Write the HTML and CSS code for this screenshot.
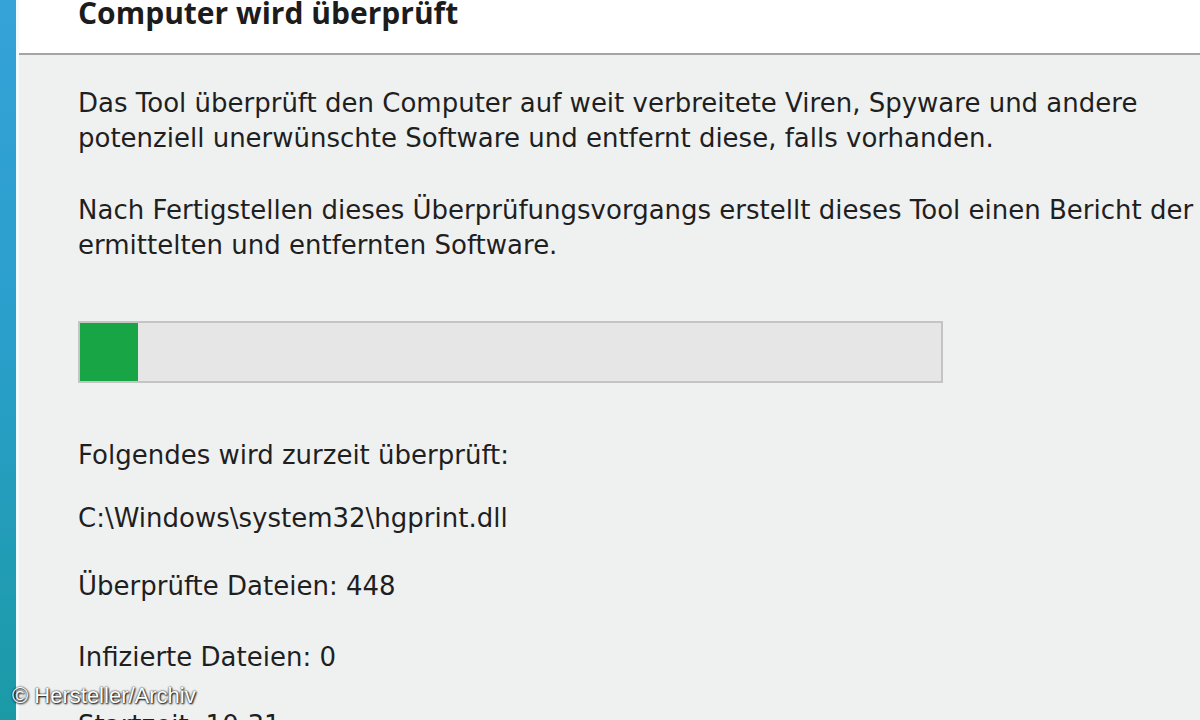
FILE: index.html
```html
<!DOCTYPE html>
<html lang="de">
<head>
<meta charset="utf-8">
<link rel="stylesheet" href="styles.css">
</head>
<body>
<div class="window">
  <div class="strip"></div>
  <div class="edge"></div>
  <div class="main">
    <div class="header">
      <h1 class="title">Computer wird überprüft</h1>
    </div>
    <div class="content">
      <p class="para">Das Tool überprüft den Computer auf weit verbreitete Viren, Spyware und andere<br>potenziell unerwünschte Software und entfernt diese, falls vorhanden.</p>
      <p class="para para-2">Nach Fertigstellen dieses Überprüfungsvorgangs erstellt dieses Tool einen Bericht der<br>ermittelten und entfernten Software.</p>
      <div class="progress"><div class="progress-fill" style="width: 58px"></div></div>
      <p class="line line-first">Folgendes wird zurzeit überprüft:</p>
      <p class="line line-path">C:\Windows\system32\hgprint.dll</p>
      <p class="line">Überprüfte Dateien: 448</p>
      <p class="line line-wide">Infizierte Dateien: 0</p>
      <p class="line">Startzeit: 10:31</p>
    </div>
  </div>
</div>
<div class="credit">© Hersteller/Archiv</div>
</body>
</html>
```
FILE: styles.css
```css
html, body {
  margin: 0;
  padding: 0;
  width: 1200px;
  height: 720px;
  overflow: hidden;
  background: #eff1f1;
}
.window {
  display: flex;
  height: 720px;
}
.strip {
  width: 16px;
  flex: none;
  background: linear-gradient(180deg, #35a2d8 0%, #2a9fcc 45%, #1b9aa6 100%);
}
.edge {
  width: 3px;
  flex: none;
  background: #f4fbfd;
}
.main {
  flex: 1;
  display: flex;
  flex-direction: column;
}
.header {
  height: 55px;
  background: #ffffff;
  border-bottom: 2px solid #a4a4a4;
  box-sizing: border-box;
  padding-left: 59px;
  flex: none;
}
.title {
  margin: 0;
  font-family: "Open Sans", "DejaVu Sans", sans-serif;
  font-weight: 700;
  font-size: 30px;
  line-height: 30px;
  color: #1c1c1c;
  position: relative;
  top: -2px;
}
.content {
  padding-left: 59px;
  font-family: "DejaVu Sans", sans-serif;
  font-size: 26px;
  color: #1f1f1f;
  white-space: nowrap;
}
.para {
  margin: 0;
  line-height: 35px;
  padding-top: 31px;
}
.para-2 {
  padding-top: 37px;
}
.progress {
  margin-top: 58px;
  width: 865px;
  height: 62px;
  box-sizing: border-box;
  border: 2px solid #c4c4c4;
  background: #e6e6e6;
  display: flex;
}
.progress-fill {
  background: #17a545;
  height: 100%;
}
.line {
  margin: 0;
  line-height: 35px;
  margin-top: 33px;
}
.line-first {
  margin-top: 55px;
}
.line-path {
  margin-top: 28px;
}
.line-wide {
  margin-top: 36px;
}
.credit {
  position: absolute;
  left: 12px;
  top: 683px;
  font-family: "Liberation Sans", sans-serif;
  font-size: 22px;
  color: #ffffff;
  text-shadow: 0 0 2px #000, 1px 1px 2px #000;
}
```
